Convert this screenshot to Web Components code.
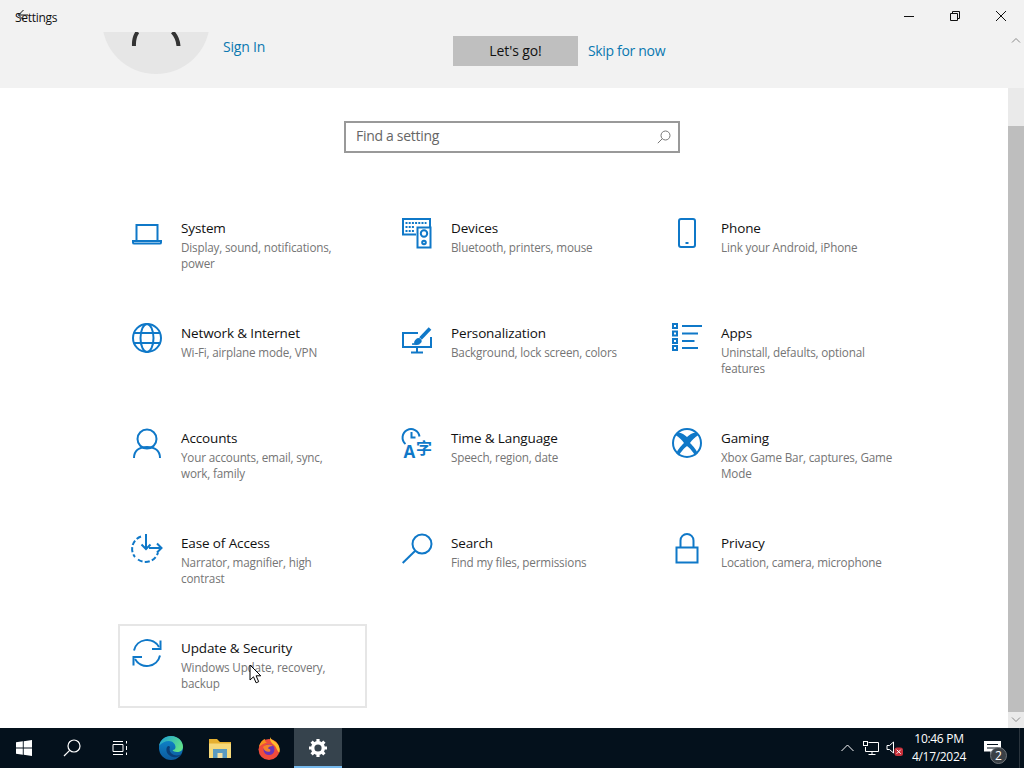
<!DOCTYPE html>
<html lang="en">
<head>
<meta charset="utf-8">
<title>Settings</title>
<style>
  html, body { margin: 0; height: 100%; overflow: hidden; background: #fff; }
  body { font-family: "Open Sans", "Liberation Sans", sans-serif; display: flex; flex-direction: column; height: 768px; }
  svg.i { display: block; fill: none; stroke: #0f78c8; stroke-width: 2; overflow: visible; }
</style>
</head>
<body>
<settings-window>
  <settings-tile name="System">
    <svg slot="icon" class="i" width="30" height="30" viewBox="0 0 30 30"><path d="M4.500 22V7h21v15"/><path d="M1 23h28v1.400q0 1.200-1.200 1.200H2.200Q1 25.600 1 24.400z"/></svg>
    Display, sound, notifications,<br>power
  </settings-tile>
  <settings-tile name="Devices">
    <svg slot="icon" class="i" width="30" height="30" viewBox="0 0 30 30"><path d="M14 16.500H1V1h27v8"/><rect x="15.500" y="9.500" width="13" height="20"/><circle cx="22" cy="15.500" r="3.200"/><circle cx="22" cy="24.500" r="1.800"/><path d="M3.500 5h21M3.500 9h9M3.500 13h9" stroke-dasharray="2 1.200"/></svg>
    Bluetooth, printers, mouse
  </settings-tile>
  <settings-tile name="Phone">
    <svg slot="icon" class="i" width="30" height="30" viewBox="0 0 30 30"><rect x="7" y="1" width="16" height="28" rx="2"/><path d="M13.500 25h3"/></svg>
    Link your Android, iPhone
  </settings-tile>

  <settings-tile name="Network &amp; Internet">
    <svg slot="icon" class="i" width="30" height="30" viewBox="0 0 30 30"><circle cx="15" cy="15" r="14"/><ellipse cx="15" cy="15" rx="6.500" ry="14"/><path d="M2 10h26M2 20h26"/></svg>
    Wi-Fi, airplane mode, VPN
  </settings-tile>
  <settings-tile name="Personalization">
    <svg slot="icon" class="i" width="30" height="30" viewBox="0 0 30 30"><path d="M16 10H1v14h28V14"/><path d="M15 24v5M9 29.500h12"/><path d="M28 5.500 18.500 15.500" stroke-width="3.600"/><path d="M17 15.500c-3 0-4 2-4.400 4-.3 1-1.400 1.500-2.600 1.500 3 1 8 1 9-2 .5-1.500 0-3-2-3.500z" fill="#0f78c8" stroke-width="1"/></svg>
    Background, lock screen, colors
  </settings-tile>
  <settings-tile name="Apps">
    <svg slot="icon" class="i" width="30" height="30" viewBox="0 0 30 30"><path d="M10 3h20M10 10.500h16M10 18h12.500M10 25h16"/><g stroke-width="2"><rect x="1" y="1" width="4" height="4"/><rect x="1" y="8.500" width="4" height="4"/><rect x="1" y="16" width="4" height="4"/><rect x="1" y="23" width="4" height="4"/></g></svg>
    Uninstall, defaults, optional<br>features
  </settings-tile>

  <settings-tile name="Accounts">
    <svg slot="icon" class="i" width="30" height="30" viewBox="0 0 30 30"><circle cx="15" cy="11" r="9.500"/><path d="M2 30c0-7 5-11 13-11s13 4 13 11"/></svg>
    Your accounts, email, sync,<br>work, family
  </settings-tile>
  <settings-tile name="Time &amp; Language">
    <svg slot="icon" class="i" width="30" height="30" viewBox="0 0 30 30"><path d="M3.500 16A8.500 8.500 0 1 1 17.500 8.500"/><path d="M9.500 4v5.500h4"/><text x="1.500" y="30" font-family="'Open Sans',sans-serif" font-size="17" font-weight="700" fill="#0f78c8" stroke="none">A</text><text x="14" y="26" font-family="'Noto Sans CJK SC',sans-serif" font-size="16" font-weight="700" fill="#0f78c8" stroke="none">字</text></svg>
    Speech, region, date
  </settings-tile>
  <settings-tile name="Gaming">
    <svg slot="icon" class="i" width="30" height="30" viewBox="0 0 30 30"><circle cx="15" cy="15" r="14"/><path d="M5.500 4.500C9 4 12.500 6.500 15 9c2.500-2.500 6-5 9.500-4.500l2 2.500C23 9 20 12 18 15c3.500 3.500 7 7.500 7.500 10.500L23 27.500c-2-4-6-8-8-9.500-2 1.500-6 5.500-8 9.500l-2.500-2C5 22.500 8.500 18.500 12 15 10 12 7 9 3.500 7z" fill="#0f78c8" stroke="none"/></svg>
    Xbox Game Bar, captures, Game<br>Mode
  </settings-tile>

  <settings-tile name="Ease of Access">
    <svg slot="icon" class="i" width="30" height="30" viewBox="0 0 30 30"><path d="M9 3.500A13 13 0 0 0 3 24M6 26.500a13 13 0 0 0 20-7" stroke-dasharray="5 2.200"/><path d="M14 1v15M9.500 11.500 14 16l4.500-4.500M17 15h12.500M25 10.500l4.500 4.500-4.500 4.500"/></svg>
    Narrator, magnifier, high<br>contrast
  </settings-tile>
  <settings-tile name="Search">
    <svg slot="icon" class="i" width="30" height="30" viewBox="0 0 30 30"><circle cx="20" cy="11" r="9.500"/><path d="M13 18 .7 30"/></svg>
    Find my files, permissions
  </settings-tile>
  <settings-tile name="Privacy">
    <svg slot="icon" class="i" width="30" height="30" viewBox="0 0 30 30"><rect x="4.500" y="14.500" width="21" height="15"/><path d="M8.500 14.500V7.500a6.500 6.500 0 0 1 13 0v7"/></svg>
    Location, camera, microphone
  </settings-tile>

  <settings-tile name="Update &amp; Security" hovered>
    <svg slot="icon" class="i" width="30" height="30" viewBox="0 0 30 30"><path d="M2 12.500A13.500 13.500 0 0 1 27 9"/><path d="M28.500 2.500V11H20"/><path d="M28 17.500A13.500 13.500 0 0 1 3 21"/><path d="M1.500 27.500V19H10"/></svg>
    Windows Update, recovery,<br>backup
  </settings-tile>
</settings-window>
<win-taskbar></win-taskbar>

<script>
// Window chrome: title row on top, then scrolling content plus scrollbar
class SettingsWindow extends HTMLElement {
  constructor() {
    super();
    const shadow = this.attachShadow({ mode: 'open' });
    shadow.innerHTML = `
      <style>
      :host { display: flex; flex-direction: column; height: 728px; position: relative; overflow: hidden; background: #fff; }
      #body { flex: 1; display: flex; min-height: 0; }
      #main { flex: 1; min-width: 0; display: flex; flex-direction: column; }
      #grid {
        margin: 51px 0 0 118px;
        display: grid;
        grid-template-columns: repeat(3, 249px);
        grid-auto-rows: 84px;
        gap: 21px;
      }
      #cursor { position: absolute; left: 249px; top: 664px; }
      </style>
      <title-bar></title-bar>
      <div id="body">
        <div id="main">
          <promo-banner></promo-banner>
          <search-box></search-box>
          <div id="grid"><slot></slot></div>
        </div>
        <scroll-bar></scroll-bar>
      </div>
      <svg id="cursor" width="13" height="20" viewBox="0 0 13 20"><path d="M1 1v15l3.500-3.200 2.600 6 2.600-1.100-2.600-5.900h4.700z" fill="#fff" stroke="#000" stroke-width="1"/></svg>
    `;
  }
}
customElements.define('settings-window', SettingsWindow);

class TitleBar extends HTMLElement {
  constructor() {
    super();
    const shadow = this.attachShadow({ mode: 'open' });
    shadow.innerHTML = `
      <style>
      :host { display: flex; height: 32px; background: #f2f2f2; align-items: center; position: relative; }
      #name { margin: 2px 0 0 15px; font-size: 12px; color: #111; flex: 1; letter-spacing: -.3px; }
      #back { position: absolute; left: 17px; top: 9px; }
      .btn { width: 46px; height: 32px; display: flex; align-items: center; justify-content: center; }
      svg { fill: none; stroke: #111; stroke-width: 1; }
      </style>
      <span id="name">Settings</span>
      <svg id="back" width="12" height="12" viewBox="0 0 12 12"><path d="M6.500 1 1.500 6l5 5M1.500 6H11"/></svg>
      <div class="btn"><svg width="10" height="10" viewBox="0 0 10 10"><path d="M0 5.500h10"/></svg></div>
      <div class="btn"><svg width="10" height="10" viewBox="0 0 10 10"><path d="M.5 2.500h7v7h-7zM2.500 2.500v-2h7v7h-2"/></svg></div>
      <div class="btn"><svg width="12" height="12" viewBox="0 0 12 12"><path d="M1 1l10 10M11 1 1 11"/></svg></div>
    `;
  }
}
customElements.define('title-bar', TitleBar);

class PromoBanner extends HTMLElement {
  constructor() {
    super();
    const shadow = this.attachShadow({ mode: 'open' });
    shadow.innerHTML = `
      <style>
      :host { display: flex; height: 56px; flex: none; background: #f2f2f2; overflow: hidden; padding-left: 102px; font-size: 14px; line-height: 20px; }
      #avatar { display: block; margin-top: -66px; flex: none; }
      a { color: #0a78b0; text-decoration: none; letter-spacing: -.2px; }
      #sign { margin: 5px 0 0 13px; width: 230px; flex: none; }
      button {
        width: 125px; height: 30px; margin-top: 4px; padding: 0; border: 0; flex: none;
        background: #bfbfbf; color: #111; font: inherit; letter-spacing: -.1px;
      }
      #skip { margin: 9px 0 0 10px; letter-spacing: -.33px; }
      </style>
      <svg id="avatar" width="108" height="108" viewBox="0 0 108 108">
        <circle cx="54" cy="54" r="54" fill="#e6e6e6"/>
        <path d="M35.500 66Q31.500 72 32 80M70.500 66Q76 72 76.500 80" fill="none" stroke="#333" stroke-width="4"/>
      </svg>
      <a id="sign">Sign In</a>
      <button>Let's go!</button>
      <a id="skip">Skip for now</a>
    `;
  }
}
customElements.define('promo-banner', PromoBanner);

class SearchBox extends HTMLElement {
  constructor() {
    super();
    const shadow = this.attachShadow({ mode: 'open' });
    shadow.innerHTML = `
      <style>
      :host {
        display: flex; align-items: center; justify-content: space-between;
        box-sizing: border-box; width: 336px; height: 32px; flex: none;
        margin: 33px 0 0 344px; padding: 0 7px 0 10px;
        border: 2px solid #999; color: #666; font-size: 14px; letter-spacing: -.3px;
      }
      span { margin-bottom: 3px; }
      svg { fill: none; stroke: #777; stroke-width: 1; }
      </style>
      <span>Find a setting</span>
      <svg width="14" height="14" viewBox="0 0 14 14"><circle cx="8.500" cy="5.500" r="4.500"/><path d="M5.300 8.700.8 13.200"/></svg>
    `;
  }
}
customElements.define('search-box', SearchBox);

class SettingsTile extends HTMLElement {
  constructor() {
    super();
    const shadow = this.attachShadow({ mode: 'open' });
    shadow.innerHTML = `
      <style>
      :host { display: flex; box-sizing: border-box; padding: 14px; border: 2px solid transparent; margin: 0; }
      :host([hovered]) { border-color: #e6e6e6; }
      #wrap { display: flex; margin: -2px; }
      #icon { width: 30px; height: 30px; flex: none; margin-right: 19px; }
      #title { font-size: 13.500px; line-height: 20px; color: #111; letter-spacing: -.13px; }
      #desc { font-size: 11.700px; line-height: 16px; color: #757575; margin-top: 1px; letter-spacing: -.18px; white-space: nowrap; }
      </style>
      <div id="wrap">
        <div id="icon"><slot name="icon"></slot></div>
        <div>
          <div id="title"></div>
          <div id="desc"><slot></slot></div>
        </div>
      </div>
    `;
    shadow.getElementById('title').textContent = this.getAttribute('name');
  }
}
customElements.define('settings-tile', SettingsTile);

class ScrollBar extends HTMLElement {
  constructor() {
    super();
    const shadow = this.attachShadow({ mode: 'open' });
    shadow.innerHTML = `
      <style>
      :host { display: flex; flex-direction: column; width: 16px; flex: none; background: #f2f2f2; }
      .arrow { height: 16px; display: flex; align-items: center; justify-content: center; flex: none; }
      #top { height: 40px; flex: none; }
      #track { height: 38px; flex: none; background: #eaeaea; }
      #thumb { flex: 1; background: #bebebe; }
      #down { background: #eaeaea; }
      svg { fill: none; stroke: #8a8a8a; stroke-width: 1; }
      </style>
      <div class="arrow"><svg width="10" height="6" viewBox="0 0 10 6"><path d="M1 5.500l4-4 4 4"/></svg></div>
      <div id="top"></div>
      <div id="track"></div>
      <div id="thumb"></div>
      <div class="arrow" id="down"><svg width="10" height="6" viewBox="0 0 10 6"><path d="M1 .5l4 4 4-4"/></svg></div>
    `;
  }
}
customElements.define('scroll-bar', ScrollBar);

class WinTaskbar extends HTMLElement {
  constructor() {
    super();
    const shadow = this.attachShadow({ mode: 'open' });
    shadow.innerHTML = `
      <style>
      :host { display: flex; height: 40px; flex: none; background: #04111c; color: #fff; align-items: stretch; font-family: "Open Sans", "Liberation Sans", sans-serif; }
      .slot { width: 48px; flex: none; display: flex; align-items: center; justify-content: center; box-sizing: border-box; }
      .app { margin-left: 1px; }
      #first { margin-left: 3px; }
      #active { background: #36434d; border-bottom: 2px solid #76b9ed; padding-top: 2px; }
      #tray { margin-left: auto; display: flex; align-items: center; padding-right: 4px; }
      #tray svg { display: block; }
      #clock { width: 56px; text-align: center; font-size: 12px; line-height: 18px; margin-left: 7px; letter-spacing: -.3px; white-space: nowrap; }
      #note { width: 48px; position: relative; display: flex; justify-content: center; margin: 0 3px 0 1px; }
      #badge {
        position: absolute; left: 22px; top: 6px; width: 15px; height: 15px; border-radius: 50%;
        background: #3a4046; border: 1px solid #70757a; font-size: 12px; line-height: 15px; text-align: center;
      }
      #edge { width: 1px; align-self: stretch; background: #2a343d; }
      </style>
      <div class="slot"><svg width="16" height="16" viewBox="0 0 16 16" fill="#fff"><path d="M0 2.300 6.800 1.300V7.500H0zM7.700 1.200 16 0V7.500H7.700zM0 8.400H6.800V14.700L0 13.700zM7.700 8.400H16V16L7.700 14.800z"/></svg></div>
      <div class="slot"><svg width="18" height="18" viewBox="0 0 18 18" fill="none" stroke="#fff" stroke-width="1.200"><circle cx="11" cy="7" r="6"/><path d="M6.700 11.300 1 17"/></svg></div>
      <div class="slot"><svg width="16" height="16" viewBox="0 0 16 16" fill="none" stroke="#fff" stroke-width="1"><path d="M1 4.500h10v7H1zM1 1.500h10M1 14.500h10M14.500 1v2.500M14.500 6v4M14.500 12.500V15"/></svg></div>
      <div class="slot app" id="first"><svg width="26" height="26" viewBox="0 0 26 26">
        <defs>
          <linearGradient id="eg" x1="0" y1="0" x2="1" y2="0.500"><stop offset="0" stop-color="#1a9cd8"/><stop offset="1" stop-color="#5fe08a"/></linearGradient>
          <linearGradient id="eb" x1="0" y1="0" x2="0" y2="1"><stop offset="0" stop-color="#0f8ad0"/><stop offset="1" stop-color="#0c5a9c"/></linearGradient>
        </defs>
        <circle cx="13" cy="13" r="12" fill="url(#eb)"/>
        <path d="M1 11C2 5 7 1 13 1c7 0 12 5 12 11 0 3-2.500 5-6 5-2.500 0-4-1-4.500-2 2 0 3-1 3-3 0-3-3-6-6.500-6C7 6 3 8 1 11z" fill="url(#eg)"/>
        <path d="M9 12c-2 4 1 9 6 10 4 .7 7-.7 9-3-3 2-8 2-10.500-.5C11.500 16.500 11 14 12 12c-1-1.500-2-1-3 0z" fill="#0a3f78"/>
      </svg></div>
      <div class="slot app"><svg width="24" height="22" viewBox="0 0 24 22">
        <path d="M1 2h8l3 3h11v5H1z" fill="#e6b030"/>
        <path d="M1 6.500h22V21H1z" fill="#f6d97a"/>
        <path d="M5 12h14v9H5z" fill="#5a9ac0"/>
        <path d="M9.500 16h5v5h-5z" fill="#f2dfa4"/>
      </svg></div>
      <div class="slot app"><svg width="24" height="24" viewBox="0 0 24 24">
        <circle cx="12" cy="13.500" r="10.500" fill="#ef4b3c"/>
        <path d="M13 1c1 3 5 3.500 8 7.500 2 3 2 6 1.500 8-2 0-3-6-6-8-2-1.500-4-4-3.500-7.500z" fill="#fdbb2d"/>
        <path d="M2 11C3 6 6 3.500 8 3c-.5 2 .5 3 2 3.500-3 1-6 2-8 4.500z" fill="#f7931e"/>
        <circle cx="12" cy="13.500" r="5.500" fill="#6a36b8"/>
        <path d="M6 11c2-2.500 7-3.500 10-1-3 0-5 1-5 2.500 2 .5 3 1 2 3-2 1-6 0-7-4.500z" fill="#f5822a"/>
      </svg></div>
      <div class="slot app" id="active"><svg width="20" height="20" viewBox="0 0 20 20"><circle cx="10" cy="10" r="5.300" fill="none" stroke="#fff" stroke-width="3.400"/><path d="M10 1v3M10 16v3M1 10h3M16 10h3M3.600 3.600l2.200 2.200M14.200 14.200l2.200 2.200M3.600 16.400l2.200-2.200M14.200 5.800l2.200-2.200" stroke="#fff" stroke-width="3.200"/></svg></div>
      <div id="tray">
        <svg width="13" height="8" viewBox="0 0 13 8" fill="none" stroke="#fff" stroke-width="1" style="margin-right:9px"><path d="M.5 7l6-6 6 6"/></svg>
        <svg width="16" height="14" viewBox="0 0 16 14" fill="none" stroke="#fff" stroke-width="1" style="margin-right:7px"><path d="M5.500 1.500h10v9h-13V6M9 10.500V13M5.500 13.500h7"/><rect x=".5" y=".5" width="4" height="4"/></svg>
        <svg width="18" height="16" viewBox="0 0 18 16"><path d="M1 5.500h2.500L7.500 2v11L3.500 9.500H1z" fill="none" stroke="#fff"/><rect x="8.500" y="7.500" width="8.500" height="8.500" rx="2.500" fill="#c8303a"/><path d="M10.700 9.700l4 4M14.700 9.700l-4 4" stroke="#fff"/></svg>
        <div id="clock">10:46 PM<br>4/17/2024</div>
        <div id="note">
          <svg width="17" height="14" viewBox="0 0 17 14"><path d="M0 0h17v10.500H9.500l-3 3.500v-3.500H0z" fill="#fff"/><path d="M3 3.500h11M3 7h11" stroke="#04111c"/></svg>
          <span id="badge">2</span>
        </div>
        <div id="edge"></div>
      </div>
    `;
  }
}
customElements.define('win-taskbar', WinTaskbar);
</script>
</body>
</html>
